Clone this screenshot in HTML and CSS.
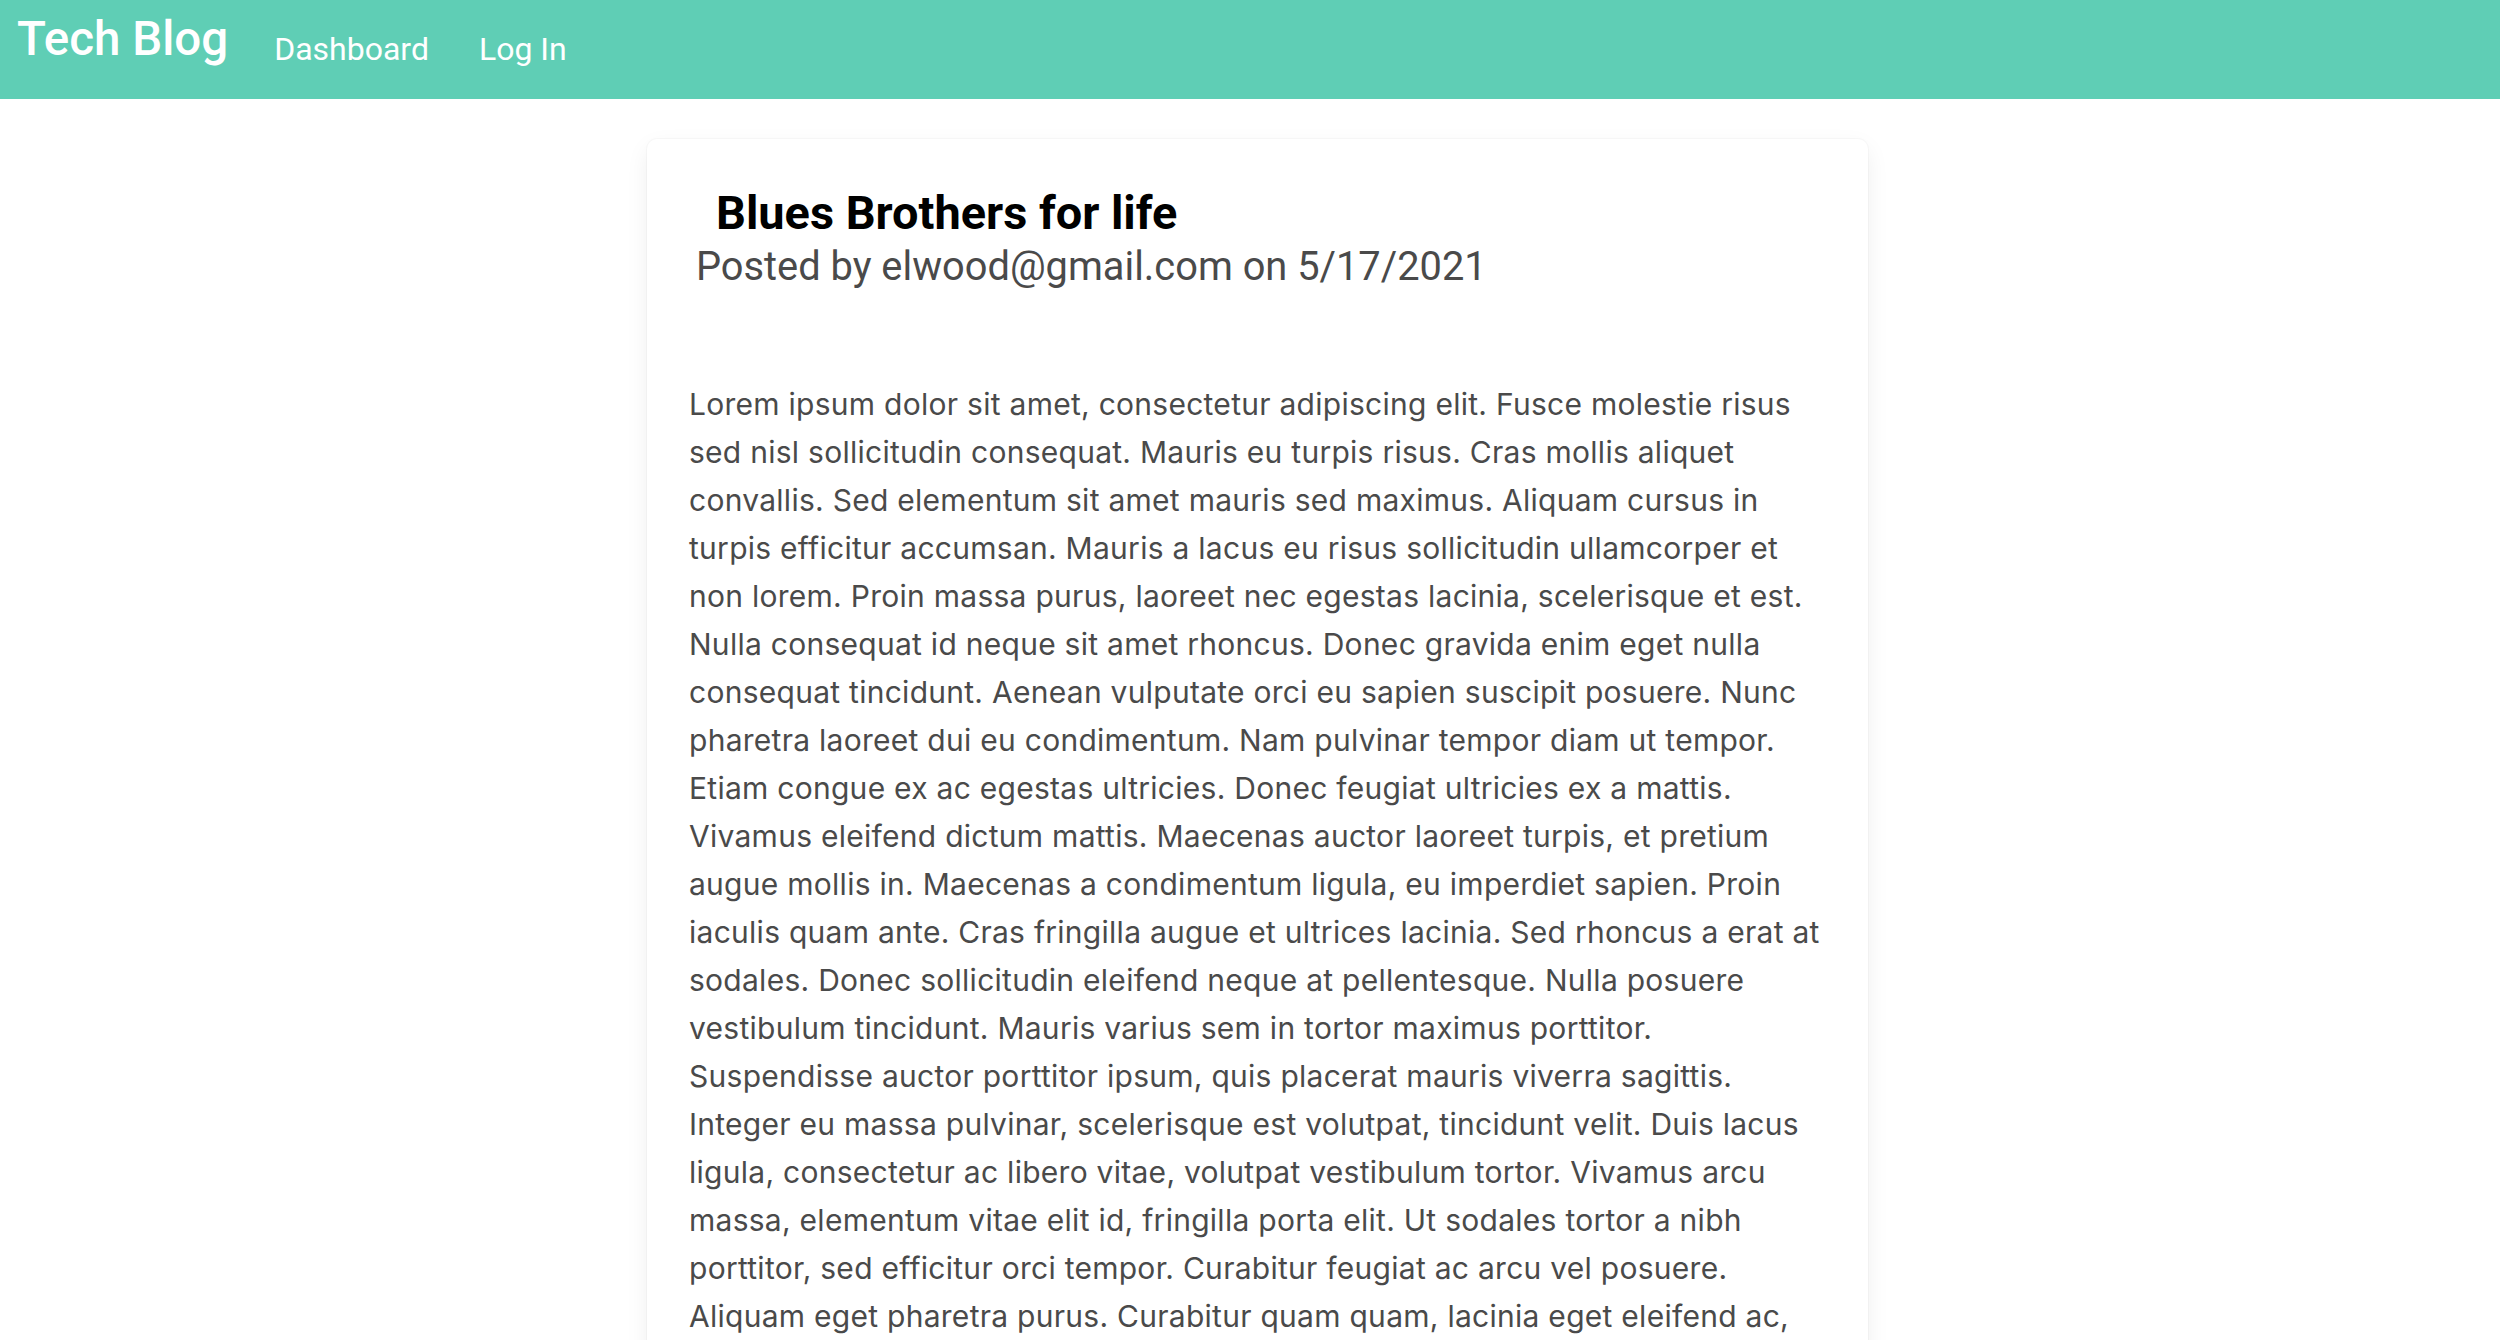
FILE: index.html
```html
<!DOCTYPE html>
<html lang="en">
<head>
<meta charset="utf-8">
<title>Tech Blog</title>
<link rel="stylesheet" href="styles.css">
</head>
<body>
<header class="topbar">
  <a class="brand" href="#">Tech Blog</a>
  <nav class="nav">
    <a class="nav-link" href="#">Dashboard</a>
    <a class="nav-link" href="#">Log In</a>
  </nav>
</header>
<main class="page">
  <article class="post-card">
    <div class="post-head">
      <h2 class="post-title">Blues Brothers for life</h2>
      <p class="post-meta">Posted by elwood@gmail.com on 5/17/2021</p>
    </div>
    <p class="post-body">Lorem ipsum dolor sit amet, consectetur adipiscing elit. Fusce molestie risus sed nisl sollicitudin consequat. Mauris eu turpis risus. Cras mollis aliquet convallis. Sed elementum sit amet mauris sed maximus. Aliquam cursus in turpis efficitur accumsan. Mauris a lacus eu risus sollicitudin ullamcorper et non lorem. Proin massa purus, laoreet nec egestas lacinia, scelerisque et est. Nulla consequat id neque sit amet rhoncus. Donec gravida enim eget nulla consequat tincidunt. Aenean vulputate orci eu sapien suscipit posuere. Nunc pharetra laoreet dui eu condimentum. Nam pulvinar tempor diam ut tempor. Etiam congue ex ac egestas ultricies. Donec feugiat ultricies ex a mattis. Vivamus eleifend dictum mattis. Maecenas auctor laoreet turpis, et pretium augue mollis in. Maecenas a condimentum ligula, eu imperdiet sapien. Proin iaculis quam ante. Cras fringilla augue et ultrices lacinia. Sed rhoncus a erat at sodales. Donec sollicitudin eleifend neque at pellentesque. Nulla posuere vestibulum tincidunt. Mauris varius sem in tortor maximus porttitor. Suspendisse auctor porttitor ipsum, quis placerat mauris viverra sagittis. Integer eu massa pulvinar, scelerisque est volutpat, tincidunt velit. Duis lacus ligula, consectetur ac libero vitae, volutpat vestibulum tortor. Vivamus arcu massa, elementum vitae elit id, fringilla porta elit. Ut sodales tortor a nibh porttitor, sed efficitur orci tempor. Curabitur feugiat ac arcu vel posuere. Aliquam eget pharetra purus. Curabitur quam quam, lacinia eget eleifend ac, tincidunt id magna. Nullam sit amet justo vel lorem tempor faucibus. Praesent vitae tortor non mi tincidunt fermentum.</p>
  </article>
</main>
</body>
</html>
```

FILE: styles.css
```css
html, body {
  margin: 0;
  padding: 0;
  background: #ffffff;
}

body {
  font-family: Inter, "Noto Sans", "Liberation Sans", sans-serif;
  color: #4a4a4a;
}

.topbar {
  height: 99px;
  background: #5fceb5;
  display: flex;
  align-items: flex-start;
  padding-left: 17px;
  box-sizing: border-box;
}

.brand {
  font-family: Roboto, "Liberation Sans", sans-serif;
  font-weight: 500;
  font-size: 47.5px;
  line-height: 1;
  color: #ffffff;
  text-decoration: none;
  margin-top: 16px;
}

.nav {
  display: flex;
  gap: 50px;
  margin-left: 46px;
  margin-top: 33px;
}

.nav-link {
  font-family: Roboto, "Liberation Sans", sans-serif;
  font-weight: 400;
  font-size: 32px;
  line-height: 1;
  color: #ffffff;
  text-decoration: none;
}

.page {
  display: flex;
  justify-content: center;
  padding: 40px 0 0 15px;
}

.post-card {
  width: 1221px;
  box-sizing: border-box;
  background: #ffffff;
  border-radius: 10px;
  box-shadow: 0 8px 24px -2px rgba(10, 10, 10, 0.08), 0 0 0 1px rgba(10, 10, 10, 0.025);
  padding: 46px 43px 40px 42px;
}

.post-head {
  font-family: Roboto, "Liberation Sans", sans-serif;
}

.post-title {
  margin: 0 0 0 27px;
  font-size: 46.9px;
  font-weight: 700;
  line-height: 1.2;
  color: #000000;
}

.post-meta {
  margin: 0 0 0 7px;
  font-size: 39.8px;
  line-height: 1.3;
  color: #4a4a4a;
}

.post-body {
  margin: 87px 0 0 0;
  font-size: 30px;
  letter-spacing: 0.27px;
  line-height: 48px;
  color: #4a4a4a;
}
```
